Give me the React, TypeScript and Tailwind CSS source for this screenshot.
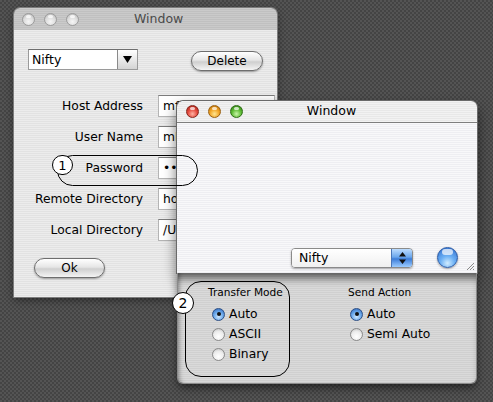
import React from 'react';

const FONT = "font-['DejaVu_Sans','Noto_Sans',sans-serif]";

function Light({ color }: { color: 'gray' | 'red' | 'orange' | 'green' }) {
  const fill = {
    gray: 'bg-[radial-gradient(circle_at_50%_70%,#f6f6f6_0%,#dadada_55%,#aeaeae_100%)] border-[#9c9c9c]',
    red: 'bg-[radial-gradient(circle_at_50%_72%,#ffb4a4_0%,#e4483c_50%,#9c1c12_100%)] border-[#86261c]',
    orange: 'bg-[radial-gradient(circle_at_50%_72%,#ffe690_0%,#f2a424_50%,#b06600_100%)] border-[#9a6010]',
    green: 'bg-[radial-gradient(circle_at_50%_72%,#c8f6a8_0%,#5cba32_50%,#2a7410_100%)] border-[#2e6e16]',
  }[color];
  return (
    <div className={`relative w-[13px] h-[13px] rounded-full border ${fill}`}>
      <div className="absolute left-[3px] top-[1px] w-[5px] h-[3px] rounded-full bg-white/70" />
    </div>
  );
}

function Field({ value }: { value: string }) {
  return (
    <div className="h-[22px] bg-white border border-[#b4b4b4] border-t-[#7c7c7c] pl-[4px] leading-[20px] overflow-hidden whitespace-nowrap">
      {value}
    </div>
  );
}

function PillButton({ label, width }: { label: string; width: string }) {
  return (
    <div
      className={`${width} h-[20px] rounded-full border border-[#6e6e6e] bg-[linear-gradient(180deg,#ffffff_0%,#e6e6e6_45%,#cfcfcf_55%,#f4f4f4_100%)] shadow-[0_1px_2px_rgba(0,0,0,0.35)] flex items-center justify-center text-[12px] text-black`}
    >
      {label}
    </div>
  );
}

function Radio({ label, checked }: { label: string; checked?: boolean }) {
  return (
    <div className="h-[20px] flex items-center gap-[4px]">
      <div
        className={
          checked
            ? 'w-[13px] h-[13px] rounded-full border border-[#2c4f86] bg-[radial-gradient(circle_at_50%_70%,#cfe8ff_0%,#6aa8ea_50%,#2a62b8_100%)] flex items-center justify-center'
            : 'w-[13px] h-[13px] rounded-full border border-[#8a8a8a] bg-[radial-gradient(circle_at_50%_70%,#ffffff_0%,#ececec_55%,#b8b8b8_100%)]'
        }
      >
        {checked && <div className="w-[4px] h-[4px] rounded-full bg-[#111]" />}
      </div>
      <span className="text-[12.3px] text-black">{label}</span>
    </div>
  );
}

export default function App() {
  return (
    <div
      className={`${FONT} relative w-[493px] h-[402px] overflow-hidden bg-[conic-gradient(#444444_25%,#545454_0_50%,#444444_0_75%,#545454_0)] bg-[length:4px_4px] text-black`}
    >
      {/* back window (inactive) */}
      <div className="absolute left-[14px] top-[8px] w-[263px] h-[289px] rounded-t-[6px] overflow-hidden flex flex-col shadow-[0_0_0_1px_#7c7c7c,0_3px_8px_rgba(0,0,0,0.45)]">
        <div className="h-[22px] shrink-0 flex items-center pl-[8px] bg-[repeating-linear-gradient(180deg,#cacaca_0px,#cacaca_1px,#c0c0c0_1px,#c0c0c0_2px)]">
          <div className="flex gap-[9px]">
            <Light color="gray" />
            <Light color="gray" />
            <Light color="gray" />
          </div>
          <span className="ml-[55px] text-[12.5px] text-[#4a4a4a]">Window</span>
        </div>
        <div className="flex-1 px-[14px] pt-[17px] bg-[repeating-linear-gradient(180deg,#ececec_0px,#ececec_1px,#e2e2e2_1px,#e2e2e2_2px)]">
          <div className="flex items-center">
            <div className="w-[122px] h-[21px] flex bg-white border border-[#9a9a9a] border-t-[#6e6e6e]">
              <span className="flex-1 pl-[3px] text-[12.5px] leading-[19px]">Nifty</span>
              <div className="w-[20px] border-l border-[#8a8a8a] bg-[linear-gradient(180deg,#ffffff,#d4d4d4)] flex items-center justify-center">
                <svg width="9" height="7" viewBox="0 0 9 7">
                  <path d="M0 0H9L4.5 7Z" fill="#000" />
                </svg>
              </div>
            </div>
            <div className="ml-[53px] mt-[4px]">
              <PillButton label="Delete" width="w-[72px]" />
            </div>
          </div>

          <div className="mt-[24px] grid grid-cols-[115px_117px] gap-x-[15px] gap-y-[9px] text-[12.3px]">
            <span className="text-right leading-[22px]">Host Address</span>
            <Field value="mftp.nifty.com" />
            <span className="text-right leading-[22px]">User Name</span>
            <Field value="mhoge" />
            <span className="text-right leading-[22px]">Password</span>
            <Field value="••••••" />
            <span className="text-right leading-[22px]">Remote Directory</span>
            <Field value="home/" />
            <span className="text-right leading-[22px]">Local Directory</span>
            <Field value="/Users/" />
          </div>

          <div className="mt-[17px] ml-[6px]">
            <PillButton label="Ok" width="w-[71px]" />
          </div>
        </div>
      </div>

      {/* front window with drawer */}
      <div className="absolute left-[177px] top-[101px] w-[300px] flex flex-col">
        <div className="h-[172px] rounded-t-[6px] overflow-hidden flex flex-col shadow-[0_0_0_1px_#6a6a6a,0_6px_14px_rgba(0,0,0,0.6)]">
          <div className="h-[22px] shrink-0 grid grid-cols-[1fr_auto_1fr] items-center pl-[9px] border-b border-[#7e7e7e] bg-[repeating-linear-gradient(180deg,#f2f2f2_0px,#f2f2f2_1px,#e8e8e8_1px,#e8e8e8_2px)]">
            <div className="flex gap-[9px]">
              <Light color="red" />
              <Light color="orange" />
              <Light color="green" />
            </div>
            <span className="text-[12.5px]">Window</span>
            <div />
          </div>
          <div className="relative flex-1 flex items-end justify-end gap-[24px] pr-[19px] pb-[5px] bg-[repeating-linear-gradient(180deg,#f8f8fa_0px,#f8f8fa_1px,#eeeef2_1px,#eeeef2_2px)]">
            <div className="w-[122px] h-[20px] rounded-[4px] overflow-hidden flex border border-[#8a8a8a] shadow-[0_1px_2px_rgba(0,0,0,0.3)]">
              <span className="flex-1 pl-[7px] text-[12.5px] leading-[18px] bg-[linear-gradient(180deg,#ffffff,#f0f0f0)]">Nifty</span>
              <div className="w-[21px] flex items-center justify-center bg-[linear-gradient(180deg,#bcdcff_0%,#6aa6ec_45%,#3c7cd8_55%,#9cccff_100%)] border-l border-[#4a76b8]">
                <svg width="7" height="12" viewBox="0 0 7 12">
                  <path d="M3.5 0L7 4.5H0Z M3.5 12L7 7.5H0Z" fill="#111" />
                </svg>
              </div>
            </div>
            <div className="relative w-[21px] h-[21px] rounded-full border border-[#2858a4] bg-[radial-gradient(circle_at_50%_80%,#d0ecff_0%,#6cb0f4_40%,#2a68cc_100%)] shadow-[0_1px_2px_rgba(0,0,0,0.35)]">
              <div className="absolute left-[4px] top-[1px] w-[11px] h-[6px] rounded-full bg-white/70" />
            </div>
            <svg className="absolute right-[2px] bottom-[2px]" width="10" height="10" viewBox="0 0 10 10">
              <path d="M9 2L2 9M9 5L5 9M9 8L8 9" stroke="#8a8a8a" strokeWidth="1" />
            </svg>
          </div>
        </div>

        <div className="h-[110px] mx-[1px] rounded-b-[5px] flex pt-[12px] bg-[repeating-linear-gradient(180deg,#dadada_0px,#dadada_1px,#d0d0d0_1px,#d0d0d0_2px)] shadow-[inset_0_10px_8px_-5px_rgba(0,0,0,0.6),inset_4px_0_5px_-3px_rgba(0,0,0,0.35),0_0_0_1px_#8a8a8a,0_4px_10px_rgba(0,0,0,0.6)]">
          <div className="w-[170px] pl-[30px] flex flex-col">
            <span className="text-[10.6px] leading-[14px]">Transfer Mode</span>
            <div className="mt-[5px] ml-[4px] flex flex-col">
              <Radio label="Auto" checked />
              <Radio label="ASCII" />
              <Radio label="Binary" />
            </div>
          </div>
          <div className="flex flex-col">
            <span className="text-[10.6px] leading-[14px]">Send Action</span>
            <div className="mt-[5px] ml-[2px] flex flex-col">
              <Radio label="Auto" checked />
              <Radio label="Semi Auto" />
            </div>
          </div>
        </div>
      </div>

      {/* annotation 1 */}
      <div className="absolute left-[57px] top-[155px] w-[141px] h-[31px] rounded-full border-[1.5px] border-black" />
      <div className="absolute left-[52px] top-[155px] w-[21px] h-[20px] rounded-full border-[1.5px] border-black bg-white flex items-center justify-center text-[13px] leading-none">
        1
      </div>

      {/* annotation 2 */}
      <div className="absolute left-[185px] top-[281px] w-[105px] h-[96px] rounded-[16px] border-[1.5px] border-black" />
      <div className="absolute left-[172px] top-[292px] w-[22px] h-[22px] rounded-full border-[1.5px] border-black bg-white flex items-center justify-center text-[14px] leading-none">
        2
      </div>
    </div>
  );
}
